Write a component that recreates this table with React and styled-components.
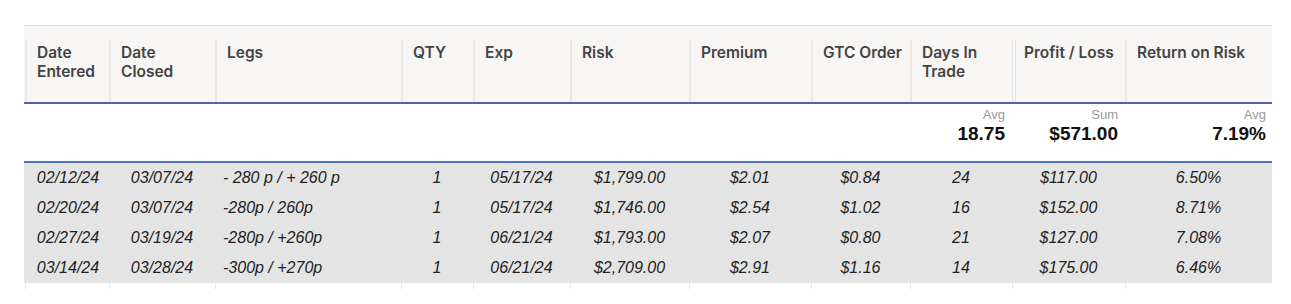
import React from 'react';
import styled, { createGlobalStyle } from 'styled-components';

const COLS = '85px 106px 186px 72px 97px 119px 122px 99px 102px 113px 147px';

const columns = [
	{ key: 'entered', label: ['Date', 'Entered'] },
	{ key: 'closed', label: ['Date', 'Closed'] },
	{ key: 'legs', label: ['Legs'], left: true },
	{ key: 'qty', label: ['QTY'] },
	{ key: 'exp', label: ['Exp'] },
	{ key: 'risk', label: ['Risk'] },
	{ key: 'premium', label: ['Premium'] },
	{ key: 'gtc', label: ['GTC Order'] },
	{ key: 'days', label: ['Days In', 'Trade'], summary: { label: 'Avg', value: '18.75' } },
	{ key: 'pl', label: ['Profit / Loss'], summary: { label: 'Sum', value: '$571.00' }, double: true },
	{ key: 'ror', label: ['Return on Risk'], summary: { label: 'Avg', value: '7.19%' } },
];

const trades = [
	{ entered: '02/12/24', closed: '03/07/24', legs: '- 280 p / + 260 p', qty: '1', exp: '05/17/24', risk: '$1,799.00', premium: '$2.01', gtc: '$0.84', days: '24', pl: '$117.00', ror: '6.50%' },
	{ entered: '02/20/24', closed: '03/07/24', legs: '-280p / 260p', qty: '1', exp: '05/17/24', risk: '$1,746.00', premium: '$2.54', gtc: '$1.02', days: '16', pl: '$152.00', ror: '8.71%' },
	{ entered: '02/27/24', closed: '03/19/24', legs: '-280p / +260p', qty: '1', exp: '06/21/24', risk: '$1,793.00', premium: '$2.07', gtc: '$0.80', days: '21', pl: '$127.00', ror: '7.08%' },
	{ entered: '03/14/24', closed: '03/28/24', legs: '-300p / +270p', qty: '1', exp: '06/21/24', risk: '$2,709.00', premium: '$2.91', gtc: '$1.16', days: '14', pl: '$175.00', ror: '6.46%' },
];

const App = () => {
	return (
		<>
			<GlobalStyle />
			<Page>
				<Table>
					<HeaderRow>
						{columns.map((col) => (
							<HeadCell key={col.key} $double={col.double}>
								{col.label.map((line) => (
									<div key={line}>{line}</div>
								))}
							</HeadCell>
						))}
					</HeaderRow>
					<SummaryRow>
						{columns.map((col) => (
							<SummaryCell key={col.key}>
								{col.summary ? (
									<>
										<SumLabel>{col.summary.label}</SumLabel>
										<SumValue>{col.summary.value}</SumValue>
									</>
								) : null}
							</SummaryCell>
						))}
					</SummaryRow>
					<Body>
						{trades.map((trade) => (
							<Row key={trade.entered}>
								{columns.map((col) => (
									<Cell key={col.key} $left={col.left}>
										{trade[col.key]}
									</Cell>
								))}
							</Row>
						))}
					</Body>
					<Footer>
						{columns.map((col) => (
							<FootCell key={col.key} $double={col.double} />
						))}
					</Footer>
				</Table>
			</Page>
		</>
	);
};

export default App;

const GlobalStyle = createGlobalStyle`
	body {
		margin: 0;
		background: #fff;
	}
`;
const Page = styled.div`
	padding: 25px 19px 0 24px;
`;
const Table = styled.div`
	width: 1248px;
`;
const HeaderRow = styled.div`
	display: grid;
	grid-template-columns: ${COLS};
	padding-top: 14px;
	background: #f7f6f5;
	border-top: 1px solid #e2e2e2;
	border-bottom: 2px solid #53659c;
`;
const HeadCell = styled.div`
	height: 62px;
	box-sizing: border-box;
	padding: 3px 6px 0 ${(p) => (p.$double ? '8px' : '10px')};
	border-left: ${(p) => (p.$double ? '4px double #e2e2e2' : '2px solid #e9e8e7')};
	font-family: Inter, 'Liberation Sans', sans-serif;
	font-weight: 600;
	font-size: 15.5px;
	line-height: 19px;
	color: #444;
	white-space: nowrap;
	&:first-child {
		margin-left: 1px;
	}
`;
const SummaryRow = styled.div`
	display: grid;
	grid-template-columns: ${COLS};
	height: 57px;
	border-bottom: 2px solid #4b73c4;
`;
const SummaryCell = styled.div`
	display: flex;
	flex-direction: column;
	align-items: flex-end;
	padding: 3px 7px 0 0;
	font-family: 'Liberation Sans', Arial, sans-serif;
	&:last-child {
		padding-right: 6px;
	}
`;
const SumLabel = styled.span`
	font-size: 13px;
	line-height: 15px;
	color: #999;
`;
const SumValue = styled.span`
	font-size: 19px;
	font-weight: 700;
	line-height: 24px;
	color: #111;
`;
const Body = styled.div`
	background: #e4e4e4;
`;
const Row = styled.div`
	display: grid;
	grid-template-columns: ${COLS};
	height: 30px;
`;
const Cell = styled.div`
	padding: ${(p) => (p.$left ? '0 0 0 8px' : '0')};
	text-align: ${(p) => (p.$left ? 'left' : 'center')};
	font-family: 'Liberation Sans', Arial, sans-serif;
	font-style: italic;
	font-size: 16px;
	line-height: 30px;
	color: #222;
	white-space: nowrap;
	&:first-child {
		padding-left: 3px;
	}
`;
const Footer = styled.div`
	display: grid;
	grid-template-columns: ${COLS};
	height: 6px;
`;
const FootCell = styled.div`
	border-left: 1px solid #e6e6e6;
	&:first-child {
		margin-left: 1px;
	}
`;
